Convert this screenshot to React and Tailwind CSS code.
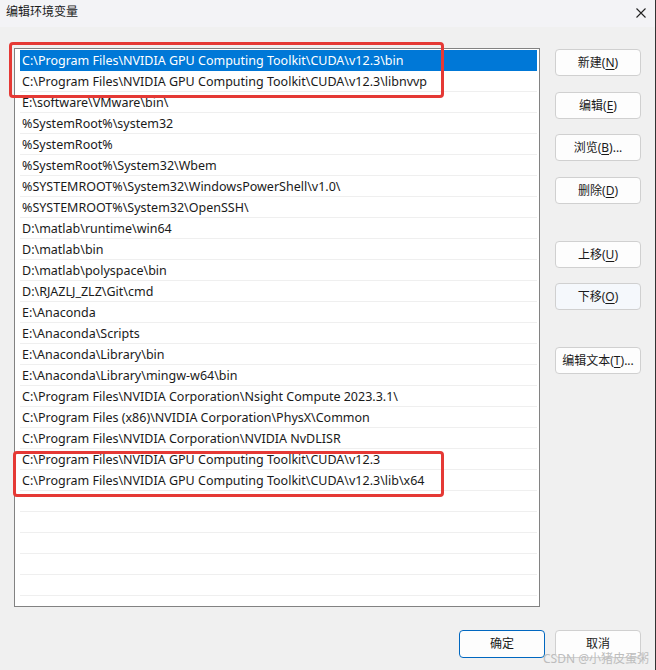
const paths = [
  'C:\\Program Files\\NVIDIA GPU Computing Toolkit\\CUDA\\v12.3\\bin',
  'C:\\Program Files\\NVIDIA GPU Computing Toolkit\\CUDA\\v12.3\\libnvvp',
  'E:\\software\\VMware\\bin\\',
  '%SystemRoot%\\system32',
  '%SystemRoot%',
  '%SystemRoot%\\System32\\Wbem',
  '%SYSTEMROOT%\\System32\\WindowsPowerShell\\v1.0\\',
  '%SYSTEMROOT%\\System32\\OpenSSH\\',
  'D:\\matlab\\runtime\\win64',
  'D:\\matlab\\bin',
  'D:\\matlab\\polyspace\\bin',
  'D:\\RJAZLJ_ZLZ\\Git\\cmd',
  'E:\\Anaconda',
  'E:\\Anaconda\\Scripts',
  'E:\\Anaconda\\Library\\bin',
  'E:\\Anaconda\\Library\\mingw-w64\\bin',
  'C:\\Program Files\\NVIDIA Corporation\\Nsight Compute 2023.3.1\\',
  'C:\\Program Files (x86)\\NVIDIA Corporation\\PhysX\\Common',
  'C:\\Program Files\\NVIDIA Corporation\\NVIDIA NvDLISR',
  'C:\\Program Files\\NVIDIA GPU Computing Toolkit\\CUDA\\v12.3',
  'C:\\Program Files\\NVIDIA GPU Computing Toolkit\\CUDA\\v12.3\\lib\\x64',
  '', '', '', '', '', '', '',
]

const font = { fontFamily: '"Noto Sans", "Noto Sans CJK SC", sans-serif' }

function Btn({ label, hot, rest = '', className = '' }) {
  return (
    <button
      className={`w-[86px] h-[27px] rounded-[4px] border border-[#d0d0d0] bg-[#fdfdfd] text-[12px] text-[#1a1a1a] flex items-center justify-center shrink-0 ${className}`}
    >
      <span>
        {label}(<span className="underline underline-offset-2">{hot}</span>){rest}
      </span>
    </button>
  )
}

export default function App() {
  return (
    <div className="w-[656px] h-[670px] bg-[#f0f0f0] flex flex-col relative border-r border-[#333]" style={font}>
      {/* Title bar */}
      <div className="h-[27px] bg-[#f3f3f6] flex items-center justify-between pl-[6px] pr-[8px] pb-[4px] shrink-0">
        <span className="text-[12px] text-[#1a1a1a]">编辑环境变量</span>
        <svg width="12" height="12" viewBox="0 0 12 12" className="mt-[2px]">
          <path d="M1.5 1.5 L10.5 10.5 M10.5 1.5 L1.5 10.5" stroke="#222" strokeWidth="1.1" />
        </svg>
      </div>

      {/* Body */}
      <div className="flex pl-[14px] pt-[21px]">
        <div className="w-[526px] h-[559px] border border-[#828282] bg-white overflow-hidden shrink-0 pt-[1px]">
          {paths.map((p, i) => (
            <div
              key={i}
              className={`h-[21px] ml-[5px] mr-[2px] pl-[2px] pt-[1px] text-[12.5px] leading-[20px] whitespace-nowrap border-b ${
                i === 0 ? 'bg-[#0078d7] text-white border-[#0078d7]' : 'text-[#1a1a1a] border-[#efefef]'
              }`}
            >
              {p}
            </div>
          ))}
        </div>

        <div className="flex flex-col ml-[15px] pt-[1px]">
          <Btn label="新建" hot="N" />
          <Btn label="编辑" hot="E" className="mt-[16px]" />
          <Btn label="浏览" hot="B" rest="..." className="mt-[15px]" />
          <Btn label="删除" hot="D" className="mt-[16px]" />
          <Btn label="上移" hot="U" className="mt-[37px]" />
          <Btn label="下移" hot="O" className="mt-[15px] !bg-[#f5f8fc]" />
          <Btn label="编辑文本" hot="T" rest="..." className="mt-[37px]" />
        </div>
      </div>

      {/* Footer */}
      <div className="flex justify-end gap-[10px] pr-[14px] mt-[23px]">
        <button className="w-[86px] h-[28px] rounded-[4px] border border-[#0067c0] bg-[#fdfdfd] text-[12px] text-[#1a1a1a]">确定</button>
        <button className="w-[86px] h-[28px] rounded-[4px] border border-[#d0d0d0] bg-[#fdfdfd] text-[12px] text-[#1a1a1a]">取消</button>
      </div>

      {/* Red highlight boxes */}
      <div className="absolute left-[9px] top-[42px] w-[435px] h-[56px] border-[3px] border-[#e53935] rounded-[4px] pointer-events-none" />
      <div className="absolute left-[13px] top-[451px] w-[431px] h-[46px] border-[3px] border-[#e53935] rounded-[4px] pointer-events-none" />

      {/* Watermark */}
      <div className="absolute right-[6px] bottom-[4px] text-[12px] leading-[14px] text-[#bdbdbd] pointer-events-none">CSDN @小猪皮蛋粥</div>
    </div>
  )
}
